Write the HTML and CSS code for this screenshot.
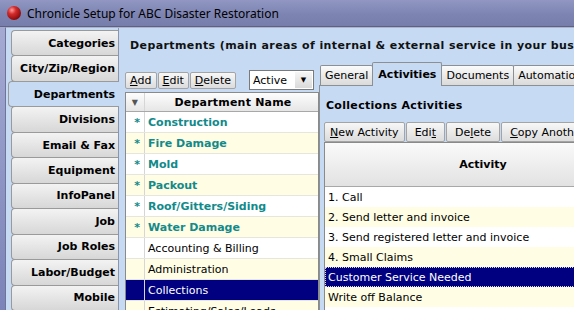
FILE: index.html
```html
<!DOCTYPE html>
<html lang="en">
<head>
  <meta charset="UTF-8" />
  <title>Chronicle Setup</title>
  <link rel="stylesheet" href="styles.css">
</head>
<body>
  <div class="window">
    <div class="titlebar">
      <span class="app-icon"></span>
      <span class="title">Chronicle Setup for ABC Disaster Restoration</span>
    </div>
    <div class="frame">
      <div class="client">
        <nav class="side-tabs">
          <div class="side-tab">Categories</div>
          <div class="side-tab">City/Zip/Region</div>
          <div class="side-tab active">Departments</div>
          <div class="side-tab">Divisions</div>
          <div class="side-tab">Email &amp; Fax</div>
          <div class="side-tab">Equipment</div>
          <div class="side-tab">InfoPanel</div>
          <div class="side-tab">Job</div>
          <div class="side-tab">Job Roles</div>
          <div class="side-tab">Labor/Budget</div>
          <div class="side-tab">Mobile</div>
        </nav>
        <main class="page">
          <h1 class="page-title">Departments (main areas of internal &amp; external service in your business)</h1>
          <div class="split">
            <section class="dept-col">
              <div class="toolbar">
                <button class="btn"><u>A</u>dd</button>
                <button class="btn"><u>E</u>dit</button>
                <button class="btn"><u>D</u>elete</button>
                <div class="select">
                  <span class="select-value">Active</span>
                  <span class="select-arrow">&#9660;</span>
                </div>
              </div>
              <div class="grid dept-grid">
                <div class="grid-head">
                  <span class="cell-mark filter">&#9660;</span>
                  <span class="cell-name">Department Name</span>
                </div>
                <div class="grid-row star"><span class="cell-mark">*</span><span class="cell-name">Construction</span></div>
                <div class="grid-row star alt"><span class="cell-mark">*</span><span class="cell-name">Fire Damage</span></div>
                <div class="grid-row star"><span class="cell-mark">*</span><span class="cell-name">Mold</span></div>
                <div class="grid-row star alt"><span class="cell-mark">*</span><span class="cell-name">Packout</span></div>
                <div class="grid-row star"><span class="cell-mark">*</span><span class="cell-name">Roof/Gitters/Siding</span></div>
                <div class="grid-row star alt"><span class="cell-mark">*</span><span class="cell-name">Water Damage</span></div>
                <div class="grid-row"><span class="cell-mark"></span><span class="cell-name">Accounting &amp; Billing</span></div>
                <div class="grid-row alt"><span class="cell-mark"></span><span class="cell-name">Administration</span></div>
                <div class="grid-row selected"><span class="cell-mark"></span><span class="cell-name">Collections</span></div>
                <div class="grid-row alt"><span class="cell-mark"></span><span class="cell-name">Estimating/Sales/Leads</span></div>
              </div>
            </section>
            <section class="detail">
              <div class="tabstrip">
                <div class="tab">General</div>
                <div class="tab active">Activities</div>
                <div class="tab">Documents</div>
                <div class="tab">Automation</div>
              </div>
              <div class="tabpanel">
                <h2 class="panel-title">Collections Activities</h2>
                <div class="toolbar toolbar-lg">
                  <button class="btn btn-tight"><u>N</u>ew Activity</button>
                  <button class="btn">Edi<u>t</u></button>
                  <button class="btn">De<u>l</u>ete</button>
                  <button class="btn"><u>C</u>opy Another Department</button>
                </div>
                <div class="grid act-grid">
                  <div class="act-head">Activity</div>
                  <div class="act-row">1. Call</div>
                  <div class="act-row alt">2. Send letter and invoice</div>
                  <div class="act-row">3. Send registered letter and invoice</div>
                  <div class="act-row alt">4. Small Claims</div>
                  <div class="act-row selected">Customer Service Needed</div>
                  <div class="act-row alt">Write off Balance</div>
                  <div class="act-row"></div>
                </div>
              </div>
            </section>
          </div>
        </main>
      </div>
    </div>
  </div>
</body>
</html>
```

FILE: styles.css
```css
* {
  box-sizing: border-box;
}

html, body {
  margin: 0;
  padding: 0;
}

body {
  width: 574px;
  height: 310px;
  overflow: hidden;
  font-family: "DejaVu Sans", Verdana, sans-serif;
  font-size: 11px;
  color: #000;
  background: #8a90bd;
}

.window {
  width: 574px;
  height: 310px;
  overflow: hidden;
  display: flex;
  flex-direction: column;
}

/* title bar */
.titlebar {
  height: 26px;
  flex: none;
  display: flex;
  align-items: center;
  gap: 6px;
  padding-left: 7px;
  background: linear-gradient(to bottom, #9197c2 0%, #7d84b2 55%, #777eac 100%);
}

.app-icon {
  width: 14px;
  height: 14px;
  border-radius: 50%;
  background: radial-gradient(circle at 35% 30%, #ff9c9c 0, #d52b2b 30%, #8c0c0c 72%, #4a0000 100%);
}

.title {
  font-family: "Noto Sans", "Open Sans", sans-serif;
  font-size: 12px;
  color: #000;
  white-space: nowrap;
}

.frame {
  flex: 1;
  min-height: 0;
  display: flex;
  padding-left: 5px;
  border-top: 1px solid #5e6280;
  background: linear-gradient(to bottom, #a4aad2, #7b83b8);
}

.client {
  flex: 1;
  min-width: 0;
  display: flex;
  background: #c6dbf3;
  border-left: 1px solid #6f7599;
  border-top: 1px solid #aab3d0;
}

/* left vertical tabs */
.side-tabs {
  width: 112px;
  flex: none;
  padding-top: 2px;
  display: flex;
  flex-direction: column;
}

.side-tab {
  height: 27px;
  margin: 0 0 -1px 5px;
  padding-right: 3px;
  display: flex;
  align-items: center;
  justify-content: flex-end;
  white-space: nowrap;
  font-weight: bold;
  border: 1px solid #9a9a9a;
  border-right: none;
  border-radius: 4px 0 0 4px;
  background: linear-gradient(to bottom, #f3f3f3, #d7d7d7);
}

.side-tab.active {
  margin-left: 2px;
  margin-right: -1px;
  padding-right: 4px;
  position: relative;
  z-index: 1;
  background: #c6dbf3;
}

/* main page */
.page {
  flex: 1;
  min-width: 0;
  overflow: hidden;
  border-left: 1px solid #8c96a8;
  padding: 10px 0 0 6px;
}

.page-title {
  margin: 0 0 8px 5px;
  font-size: 11px;
  line-height: 16px;
  font-weight: bold;
  letter-spacing: 0.4px;
  color: #111;
  white-space: nowrap;
}

.split {
  display: flex;
  align-items: flex-start;
}

.dept-col {
  width: 194px;
  flex: none;
  padding-top: 8px;
}

.toolbar {
  height: 20px;
  display: flex;
  align-items: center;
  gap: 1px;
}

.btn {
  height: 17px;
  padding: 0 4px;
  display: flex;
  align-items: center;
  font-family: inherit;
  font-size: 11px;
  color: #000;
  white-space: nowrap;
  border: 1px solid #a4a4a4;
  border-radius: 2px;
  background: linear-gradient(to bottom, #f7f7f7, #dcdcdc);
}

.btn u {
  text-decoration: underline;
}

.toolbar-lg .btn {
  height: 20px;
  padding: 0 8px;
}

.toolbar-lg .btn.btn-tight {
  padding: 0 5px;
}

.select {
  width: 65px;
  height: 20px;
  margin-left: 12px;
  display: flex;
  align-items: stretch;
  background: #fff;
  border: 1px solid #7a7a7a;
}

.select-value {
  flex: 1;
  padding-left: 3px;
  display: flex;
  align-items: center;
}

.select-arrow {
  width: 17px;
  margin: 1px;
  display: flex;
  align-items: center;
  justify-content: center;
  font-size: 7px;
  color: #000;
  background: linear-gradient(to bottom, #f6f6f6, #dadada);
}

/* grids */
.grid {
  background: #fff;
  border: 1px solid #8a8a8a;
}

.dept-grid {
  margin-top: 2px;
  height: 220px;
  overflow: hidden;
}

.grid-head,
.grid-row {
  display: flex;
  align-items: stretch;
  white-space: nowrap;
}

.grid-head {
  height: 19px;
  font-weight: bold;
  letter-spacing: 0.2px;
  border-bottom: 1px solid #a8a8a8;
  background: linear-gradient(to bottom, #fdfdfd, #e6e6e6);
}

.grid-row {
  height: 21px;
  border-bottom: 1px solid #e6e6e0;
}

.cell-mark {
  width: 18px;
  flex: none;
  display: flex;
  align-items: center;
  justify-content: flex-end;
  padding-right: 4px;
}

.cell-mark.filter {
  justify-content: center;
  padding-right: 0;
  font-size: 8px;
  color: #555;
}

.cell-name {
  flex: 1;
  display: flex;
  align-items: center;
  padding-left: 3px;
  border-left: 1px solid #d6d6d6;
}

.grid-head .cell-name {
  justify-content: center;
}

.grid-row.alt {
  background: #fffde4;
}

.grid-row.star {
  color: #128a8a;
  font-weight: bold;
}

.grid-row.selected {
  background: #000080;
  color: #fff;
}

/* right tab control */
.detail {
  width: 330px;
  flex: none;
}

.tabstrip {
  height: 23px;
  padding-left: 1px;
  display: flex;
  align-items: flex-end;
}

.tab {
  height: 20px;
  padding: 0 4px;
  margin-right: -1px;
  display: flex;
  align-items: center;
  white-space: nowrap;
  border: 1px solid #8d9093;
  border-bottom: none;
  border-radius: 2px 2px 0 0;
  background: linear-gradient(to bottom, #fbfbfb, #dadada);
}

.tab.active {
  height: 24px;
  margin-bottom: -1px;
  padding: 0 5px;
  position: relative;
  z-index: 1;
  font-weight: bold;
  background: #c6dbf3;
}

.tabpanel {
  height: 240px;
  padding: 12px 0 0 4px;
  border-top: 1px solid #8d9093;
  border-left: 1px solid #8d9093;
}

.panel-title {
  margin: 0 0 8px 2px;
  font-size: 11px;
  line-height: 16px;
  font-weight: bold;
  letter-spacing: 0.3px;
}

.act-grid {
  width: 318px;
  height: 180px;
  overflow: hidden;
}

.act-head {
  height: 44px;
  display: flex;
  align-items: center;
  justify-content: center;
  font-weight: bold;
  border-bottom: 1px solid #a8a8a8;
  background: linear-gradient(to bottom, #fafafa, #e2e2e2);
}

.act-row {
  height: 20px;
  padding-left: 3px;
  display: flex;
  align-items: center;
  white-space: nowrap;
}

.act-row.alt {
  background: #fffde4;
}

.act-row.selected {
  background: #000080;
  color: #fff;
  padding-left: 2px;
  border: 1px dotted #d8d8ff;
}
```
